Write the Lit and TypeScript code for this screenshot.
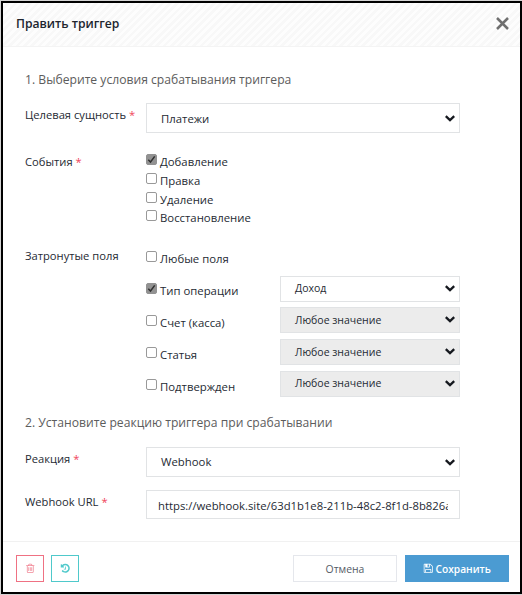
import { LitElement, html, css, svg } from "lit";
import { customElement, property } from "lit/decorators.js";
import { classMap } from "lit/directives/class-map.js";

@customElement("select-box")
class SelectBox extends LitElement {
  @property() value = "";
  @property({ type: Boolean, reflect: true }) disabled = false;
  @property({ type: Boolean, reflect: true }) small = false;

  static styles = css`
    :host { display: flex; box-sizing: border-box; align-items: center; justify-content: space-between;
      height: 30px; border: 1px solid #e1e3e5; background: #fff; padding: 1px 4px 0 14px;
      font-size: 11.35px; line-height: 16px; color: #252a33; }
    :host([small]) { height: 26px; font-size: 10.5px; padding: 0 4px 1px 14px; }
    :host([disabled]) { background: #ececec; }
    svg { display: block; width: 10px; height: 7px; fill: none; stroke: #16191f; stroke-width: 2.3; }
  `;

  render() {
    return html`<span>${this.value}</span><svg viewBox="0 0 10 7"><path d="M.8 1.2 5 5.2 9.2 1.2" /></svg>`;
  }
}

@customElement("check-item")
class CheckItem extends LitElement {
  @property() label = "";
  @property({ type: Boolean }) checked = false;

  static styles = css`
    :host { display: flex; align-items: flex-start; gap: 3px; }
    .box { box-sizing: border-box; width: 11px; height: 11px; border: 1px solid #999; border-radius: 2px; background: #fff; }
    .box.on { background: #929292; border-color: #929292; }
    svg { display: block; width: 9px; height: 9px; fill: none; stroke: #303030; stroke-width: 1.5; }
    .text { font-size: 11.35px; line-height: 16px; }
  `;

  render() {
    return html`<div class=${classMap({ box: true, on: this.checked })}>
        ${this.checked ? html`<svg viewBox="0 0 9 9"><path d="M1.3 4.8 3.5 7 7.7 1.4" /></svg>` : ""}
      </div><span class="text">${this.label}</span>`;
  }
}

const trashIcon = svg`<path d="M704 736v576q0 14-9 23t-23 9h-64q-14 0-23-9t-9-23v-576q0-14 9-23t23-9h64q14 0 23 9t9 23zm256 0v576q0 14-9 23t-23 9h-64q-14 0-23-9t-9-23v-576q0-14 9-23t23-9h64q14 0 23 9t9 23zm256 0v576q0 14-9 23t-23 9h-64q-14 0-23-9t-9-23v-576q0-14 9-23t23-9h64q14 0 23 9t9 23zm128 724v-948h-896v948q0 22 7 40.5t14.5 27 10.5 8.5h832q3 0 10.5-8.5t14.5-27 7-40.5zm-672-1076h448l-48-117q-7-9-17-11h-317q-10 2-17 11zm928 32v64q0 14-9 23t-23 9h-96v948q0 83-47 143.5t-113 60.5h-832q-66 0-113-58.5t-47-141.5v-952h-96q-14 0-23-9t-9-23v-64q0-14 9-23t23-9h309l70-167q15-37 54-63t79-26h320q40 0 79 26t54 63l70 167h309q14 0 23 9t9 23z" />`;
const historyIcon = svg`<path d="M1664 896q0 156-61 298t-164 245-245 164-298 61q-172 0-327-72.5t-264-204.5q-7-10-6.5-22.5t8.5-20.5l137-138q10-9 25-9 16 2 23 12 73 95 179 147t225 52q104 0 198.5-40.5t163.5-109.5 109.5-163.5 40.5-198.5-40.5-198.5-109.5-163.5-163.5-109.5-198.5-40.5q-98 0-188 35.5t-160 101.5l137 138q31 30 14 69-17 40-59 40h-448q-26 0-45-19t-19-45v-448q0-42 40-59 39-17 69 14l130 129q107-101 244.5-156.5t284.5-55.5q156 0 298 61t245 164 164 245 61 298zm-640-288v448q0 14-9 23t-23 9h-320q-14 0-23-9t-9-23v-64q0-14 9-23t23-9h224v-352q0-14 9-23t23-9h64q14 0 23 9t9 23z" />`;
const saveIcon = svg`<path d="M512 1536h768v-384h-768v384zm896 0h128v-896q0-14-10-38.5t-20-34.5l-281-281q-10-10-34-20t-39-10v416q0 40-28 68t-68 28h-576q-40 0-68-28t-28-68v-416h-128v1280h128v-416q0-40 28-68t68-28h832q40 0 68 28t28 68v416zm-384-928v-320q0-13-9.5-22.5t-22.5-9.5h-192q-13 0-22.5 9.5t-9.5 22.5v320q0 13 9.5 22.5t22.5 9.5h192q13 0 22.5-9.5t9.5-22.5zm640 32v928q0 40-28 68t-68 28h-1344q-40 0-68-28t-28-68v-1344q0-40 28-68t68-28h928q40 0 88 20t76 48l280 280q28 28 48 76t20 88z" />`;

@customElement("app-root")
class AppRoot extends LitElement {
  events = [
    { label: "Добавление", on: true },
    { label: "Правка", on: false },
    { label: "Удаление", on: false },
    { label: "Восстановление", on: false },
  ];

  fields = [
    { label: "Тип операции", on: true, value: "Доход" },
    { label: "Счет (касса)", on: false, value: "Любое значение" },
    { label: "Статья", on: false, value: "Любое значение" },
    { label: "Подтвержден", on: false, value: "Любое значение" },
  ];

  static styles = css`
    :host { display: block; box-sizing: border-box; width: 522px; height: 595px; padding: 1px 0 1px 1px;
      background: #d4d4d4; font-family: "Open Sans", "Noto Sans", sans-serif; font-size: 11.2px; color: #252a33; }
    .dialog { box-sizing: border-box; height: 593px; border: 2px solid #000; background: #fff; display: flex; flex-direction: column; }
    header { box-sizing: border-box; height: 44px; flex: none; display: flex; align-items: center; justify-content: space-between;
      padding: 0 11px 2px 13px; border-bottom: 1px solid #f4f4f4;
      background: repeating-linear-gradient(135deg, #fdfdfd 0 2.6px, #f8f8f8 2.6px 5.2px); }
    h1 { margin: 0; font-size: 12.15px; line-height: 18px; font-weight: 600; color: #20252e; }
    .close { width: 13px; height: 13px; fill: none; stroke: #707070; stroke-width: 2.5; }
    .body { flex: 1; padding: 0 60px 0 22px; }
    h2 { margin: 0; font-size: 12.15px; line-height: 18px; font-weight: 400; color: #5c5c5c; white-space: nowrap; }
    .body h2:first-child { margin-top: 24px; }
    .row { display: grid; grid-template-columns: 121px minmax(0, 1fr); }
    .label { line-height: 16px; padding-top: 4px; white-space: nowrap; }
    .label i { font-style: normal; color: #f0455a; }
    .entity { margin-top: 14px; }
    .events { margin-top: 21px; }
    .events .label { padding-top: 0; }
    .checks { display: grid; grid-auto-rows: 18.8px; height: 76px; }
    .touched { margin-top: 18px; }
    .touched .label { padding-top: 0; }
    .any { height: 24.6px; padding-top: 3px; }
    .field { display: grid; grid-template-columns: 134px 1fr; height: 31.8px; }
    .field check-item { padding-top: 7.6px; }
    .second { padding-top: 11.2px; }
    .reaction { margin-top: 15px; }
    .url { margin-top: 13px; }
    .input { box-sizing: border-box; height: 29px; border: 1px solid #e1e3e5; padding: 7px 11px 0; line-height: 16px; font-size: 11.3px; }
    .clip { overflow: hidden; white-space: nowrap; }
    footer { box-sizing: border-box; height: 51px; flex: none; border-top: 1px solid #f1f1f1; display: flex; align-items: flex-start; padding: 13px 11px 0 13px; }
    .btn { box-sizing: border-box; height: 27px; border: 1px solid; display: flex; align-items: center; justify-content: center; font-size: 10.4px; }
    .icon { width: 28px; }
    .btn svg { fill: currentColor; width: 10.5px; height: 10.5px; }
    .del { color: #ef7183; margin-right: 7px; }
    .del svg { opacity: 0.85; }
    .hist { color: #4fc9cb; }
    .cancel { width: 104px; margin-left: auto; border-color: #e5e7ec; color: #555b66; }
    .save { width: 104px; margin-left: 8px; background: #4b9bd2; border-color: #4b9bd2; color: #fff; font-weight: 600; font-size: 10.2px; gap: 2px; }
  `;

  render() {
    return html`<section class="dialog">
      <header>
        <h1>Править триггер</h1>
        <svg class="close" viewBox="0 0 13 13"><path d="M1 1 12 12M12 1 1 12" /></svg>
      </header>
      <div class="body">
        <h2>1. Выберите условия срабатывания триггера</h2>
        <div class="row entity">
          <div class="label">Целевая сущность <i>*</i></div>
          <select-box value="Платежи"></select-box>
        </div>
        <div class="row events">
          <div class="label">События <i>*</i></div>
          <div class="checks">
            ${this.events.map((e) => html`<check-item label=${e.label} ?checked=${e.on}></check-item>`)}
          </div>
        </div>
        <div class="row touched">
          <div class="label">Затронутые поля</div>
          <div>
            <check-item class="any" label="Любые поля"></check-item>
            ${this.fields.map(
              (f) => html`<div class="field">
                <check-item label=${f.label} ?checked=${f.on}></check-item>
                <select-box small ?disabled=${!f.on} value=${f.value}></select-box>
              </div>`
            )}
          </div>
        </div>
        <h2 class="second">2. Установите реакцию триггера при срабатывании</h2>
        <div class="row reaction">
          <div class="label">Реакция <i>*</i></div>
          <select-box value="Webhook"></select-box>
        </div>
        <div class="row url">
          <div class="label">Webhook URL <i>*</i></div>
          <div class="input"><div class="clip">https://webhook.site/63d1b1e8-211b-48c2-8f1d-8b826a</div></div>
        </div>
      </div>
      <footer>
        <div class="btn icon del"><svg viewBox="0 0 1792 1792">${trashIcon}</svg></div>
        <div class="btn icon hist"><svg viewBox="0 0 1792 1792">${historyIcon}</svg></div>
        <div class="btn cancel">Отмена</div>
        <div class="btn save"><svg viewBox="0 0 1792 1792">${saveIcon}</svg>Сохранить</div>
      </footer>
    </section>`;
  }
}
